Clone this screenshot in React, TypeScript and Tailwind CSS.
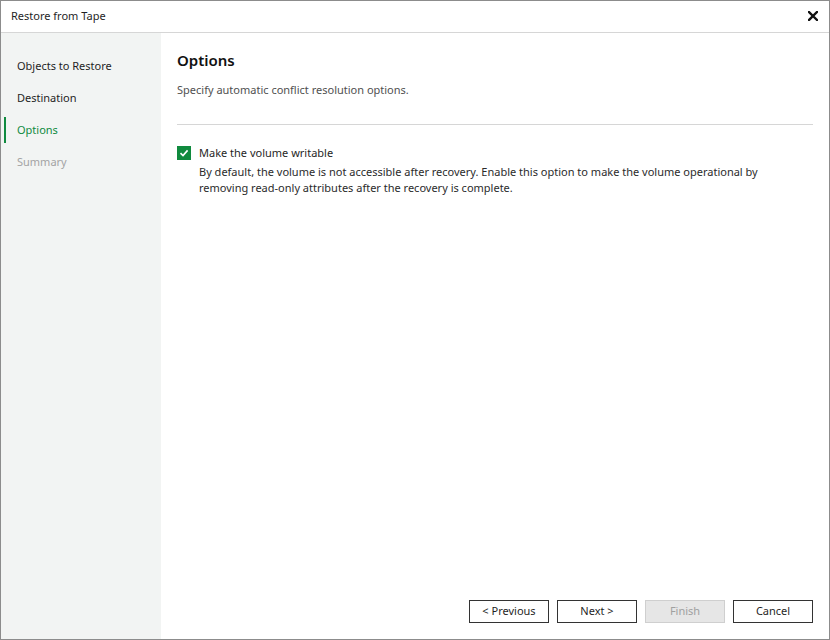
const steps = [
  { label: 'Objects to Restore', state: 'done' },
  { label: 'Destination', state: 'done' },
  { label: 'Options', state: 'active' },
  { label: 'Summary', state: 'disabled' },
];

const buttons = [
  { label: '< Previous', disabled: false },
  { label: 'Next >', disabled: false },
  { label: 'Finish', disabled: true },
  { label: 'Cancel', disabled: false },
];

export default function App() {
  return (
    <div
      className="w-[830px] h-[640px] bg-white border border-[#8c8c8c] flex flex-col text-[11px] text-[#1f1f1f]"
      style={{ fontFamily: '"Noto Sans", "Open Sans", sans-serif' }}
    >
      {/* Title bar */}
      <div className="h-[32px] shrink-0 border-b border-[#d6d6d6] flex items-center justify-between pl-[10px] pr-[11px] pb-px">
        <span className="leading-4">Restore from Tape</span>
        <svg width="10" height="10" viewBox="0 0 10 10">
          <path d="M1 1 L9 9 M9 1 L1 9" stroke="#111" strokeWidth="2.4" strokeLinecap="square" />
        </svg>
      </div>

      <div className="flex-1 flex min-h-0">
        {/* Steps */}
        <div className="w-[160px] shrink-0 bg-[#f2f4f3] pt-[20px] flex flex-col gap-[6px]">
          {steps.map((step) => (
            <div key={step.label} className="relative h-[26px] flex items-center pl-4">
              {step.state === 'active' && (
                <div className="absolute left-[3px] top-0 w-[2px] h-[26px] bg-[#0f8a3f]" />
              )}
              <span
                className={
                  step.state === 'active'
                    ? 'text-[#0f8a3f]'
                    : step.state === 'disabled'
                    ? 'text-[#a3a3a3]'
                    : 'text-[#1f1f1f]'
                }
              >
                {step.label}
              </span>
            </div>
          ))}
        </div>

        {/* Content */}
        <div className="flex-1 flex flex-col px-4 pt-[17px] pb-4">
          <h1 className="text-[15px] leading-5 font-semibold text-[#111]">Options</h1>
          <p className="mt-[12px] leading-4 text-[#505050]">Specify automatic conflict resolution options.</p>
          <div className="mt-[26px] h-px bg-[#d6d6d6]" />

          <div className="mt-[20px] flex gap-[8px]">
            <div className="mt-[1px] w-[14px] h-[14px] bg-[#108a3e] flex items-center justify-center shrink-0">
              <svg width="10" height="10" viewBox="0 0 10 10">
                <path d="M1.5 5.2 L4 7.6 L8.6 2.4" fill="none" stroke="#fff" strokeWidth="1.6" />
              </svg>
            </div>
            <div className="flex flex-col">
              <span className="leading-4">Make the volume writable</span>
              <p className="mt-[3px] leading-4 text-[#2b2b2b]">
                By default, the volume is not accessible after recovery. Enable this option to make the volume operational by
                <br />
                removing read-only attributes after the recovery is complete.
              </p>
            </div>
          </div>

          <div className="mt-auto flex justify-end gap-2">
            {buttons.map((b) => (
              <button
                key={b.label}
                className={
                  b.disabled
                    ? 'w-[80px] h-[23px] pb-[2px] border border-[#cfcfcf] bg-[#e6e6e6] text-[#a0a0a0] leading-4'
                    : 'w-[80px] h-[23px] pb-[2px] border border-[#333] bg-white text-[#1f1f1f] leading-4'
                }
              >
                {b.label}
              </button>
            ))}
          </div>
        </div>
      </div>
    </div>
  );
}
